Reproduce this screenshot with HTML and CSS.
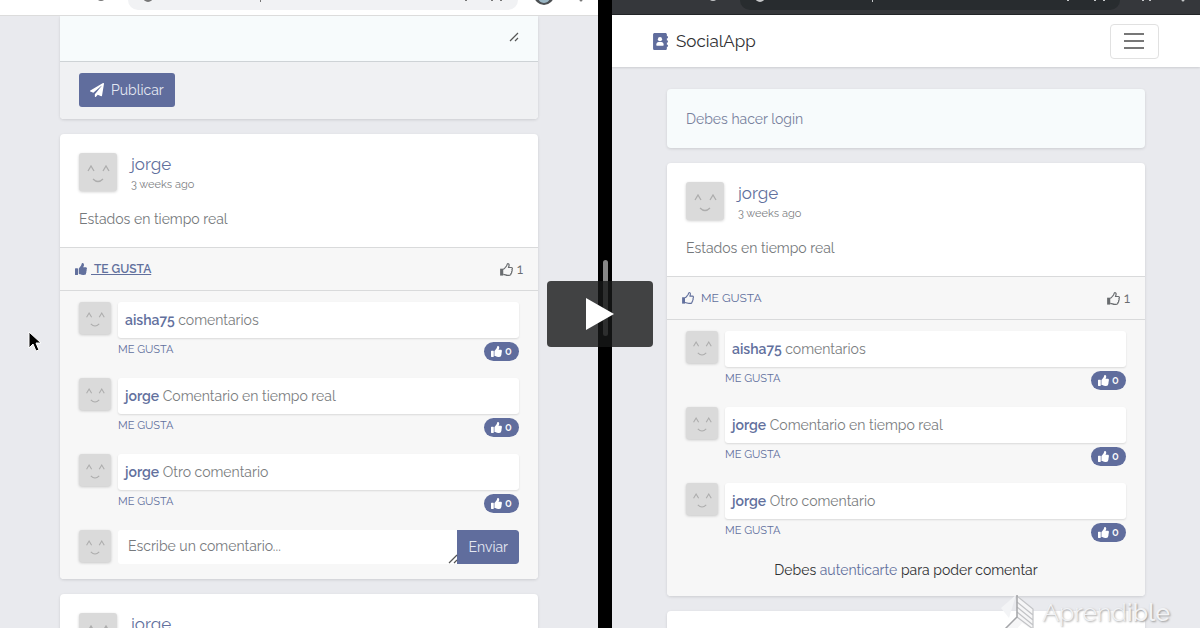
FILE: index.html
```html
<!DOCTYPE html>
<html lang="es">

<head>
    <meta charset="UTF-8">
    <meta name="viewport" content="width=device-width, initial-scale=1.0">
    <title>SocialApp</title>
    <link rel="stylesheet" href="styles.css">
</head>

<body>
    <!-- shared icons -->
    <svg class="sprite" aria-hidden="true">
        <symbol id="thumb" viewBox="0 0 512 512">
            <path d="M104 224H24c-13.300 0-24 10.700-24 24v240c0 13.300 10.700 24 24 24h80c13.300 0 24-10.700 24-24V248c0-13.300-10.700-24-24-24zM384 81.500c0 42.400-26 66.200-33.300 94.500h101.700c33.400 0 59.400 27.700 59.600 58.100.1 17.900-7.500 37.200-19.400 49.200 9.800 23.400 8.200 56.100-9.300 79.500 8.700 25.900-.1 57.700-16.400 74.800 4.300 17.600 2.200 32.600-6.100 44.600C440.600 511.600 389.600 512 346.800 512h-2.800c-48.300 0-87.800-17.600-119.600-31.700-16-7.100-36.800-15.900-52.700-16.200-6.500-.1-11.800-5.500-11.800-12V238.300c0-3.200 1.300-6.300 3.600-8.500 39.600-39.100 56.600-80.600 89.100-113.100 14.800-14.800 20.200-37.200 25.400-58.900C282.500 39.300 291.800 0 312 0c24 0 72 8 72 81.500z"/>
        </symbol>
        <symbol id="thumb-o" viewBox="0 0 512 512">
            <path d="M4 224h124v272H4z"/>
            <path d="M128 250c60-24 88-92 124-126 26-26 22-98 54-98 84 0 48 106 26 150h112c50 0 58 66 22 86 22 26 16 72-12 84 12 34-2 62-26 72 8 44-26 68-76 68h-54c-68 0-92-38-170-40" fill="none" stroke="currentColor" stroke-width="46" stroke-linejoin="round"/>
        </symbol>
        <symbol id="face" viewBox="0 0 38 38">
            <g fill="none" stroke="#adadad" stroke-width="1.300">
                <path d="M9 18l3-5 3 5M24 18l3-5 3 5M14 26q5 5 10 0"/>
            </g>
        </symbol>
        <symbol id="grip" viewBox="0 0 10 10">
            <path d="M1 9l8-8M6 9l3-3" fill="none" stroke="#555" stroke-width="1.200"/>
        </symbol>
    </svg>

    <section class="pane pane-left">
        <div class="browser">
            <div class="omnibox"></div>
            <svg class="browser-icons" viewBox="0 0 598 15" aria-hidden="true">
                <g fill="#777">
                    <circle cx="101" cy="-3" r="4"/>
                    <circle cx="148" cy="-3" r="5"/>
                    <path d="M260 0h1v2h-1zM465 0h2v1h-2zM491 0h2v1h-2zM500 0h2v1h-2z"/>
                    <circle cx="581" cy="0" r="1.500"/>
                </g>
                <circle cx="544" cy="-5" r="10" fill="#4c4f52"/>
                <circle cx="544" cy="-3" r="6" fill="#9ab6c4"/>
            </svg>
        </div>
        <main class="feed">
            <form class="card publish">
                <div class="publish-text">
                    <textarea aria-label="Estado"></textarea>
                    <svg class="grip"><use href="#grip"/></svg>
                </div>
                <div class="publish-footer">
                    <button type="button" class="btn">
                        <svg viewBox="0 0 512 512"><path d="M476 3L12 271c-18 10-16 36 2 43l107 45L409 106c6-5 14 3 9 9L177 409v80c0 24 29 33 42 16l64-78 125 53c14 6 31-3 33-19L512 28c4-20-18-35-36-25z"/></svg>
                        Publicar
                    </button>
                </div>
            </form>

            <article class="card">
                <div class="status">
                    <div class="author">
                        <svg class="avatar"><use href="#face"/></svg>
                        <div>
                            <h2><a href="#">jorge</a></h2>
                            <p class="time">3 weeks ago</p>
                        </div>
                    </div>
                    <p class="status-body">Estados en tiempo real</p>
                </div>
                <div class="actions">
                    <button type="button" class="like liked"><svg><use href="#thumb"/></svg><span>&nbsp;TE GUSTA</span></button>
                    <span class="count"><svg><use href="#thumb-o"/></svg>1</span>
                </div>
                <div class="comments">
                    <div class="comment">
                        <svg class="avatar small"><use href="#face"/></svg>
                        <div class="comment-main">
                            <p class="bubble"><a href="#">aisha75</a> comentarios</p>
                            <div class="comment-foot">
                                <button type="button" class="comment-like">ME GUSTA</button>
                                <span class="badge"><svg><use href="#thumb"/></svg>0</span>
                            </div>
                        </div>
                    </div>
                    <div class="comment">
                        <svg class="avatar small"><use href="#face"/></svg>
                        <div class="comment-main">
                            <p class="bubble"><a href="#">jorge</a> Comentario en tiempo real</p>
                            <div class="comment-foot">
                                <button type="button" class="comment-like">ME GUSTA</button>
                                <span class="badge"><svg><use href="#thumb"/></svg>0</span>
                            </div>
                        </div>
                    </div>
                    <div class="comment">
                        <svg class="avatar small"><use href="#face"/></svg>
                        <div class="comment-main">
                            <p class="bubble"><a href="#">jorge</a> Otro comentario</p>
                            <div class="comment-foot">
                                <button type="button" class="comment-like">ME GUSTA</button>
                                <span class="badge"><svg><use href="#thumb"/></svg>0</span>
                            </div>
                        </div>
                    </div>
                    <form class="comment">
                        <svg class="avatar small"><use href="#face"/></svg>
                        <div class="reply">
                            <textarea rows="1" aria-label="Comentario" placeholder="Escribe un comentario..."></textarea>
                            <svg class="grip"><use href="#grip"/></svg>
                            <button type="button" class="btn">Enviar</button>
                        </div>
                    </form>
                </div>
            </article>

            <article class="card">
                <div class="status">
                    <div class="author">
                        <svg class="avatar"><use href="#face"/></svg>
                        <div>
                            <h2><a href="#">jorge</a></h2>
                        </div>
                    </div>
                </div>
            </article>
        </main>
        <svg class="cursor" viewBox="0 0 14 22" aria-hidden="true">
            <path d="M1 1v16l4-4 3 7 3-1-3-7h5z" fill="#000" stroke="#fff"/>
        </svg>
    </section>

    <div class="divider"><span></span></div>

    <section class="pane pane-right">
        <div class="browser dark">
            <div class="omnibox"></div>
            <svg class="browser-icons" viewBox="0 0 588 15" aria-hidden="true">
                <g fill="#c5c7c9">
                    <circle cx="101" cy="-3" r="4"/>
                    <circle cx="148" cy="-3" r="5"/>
                    <path d="M260 0h1v2h-1zM455 0h2v1h-2zM482 0h2v1h-2zM491 0h2v1h-2zM530 0h2v1h-2zM537 0h2v1h-2z"/>
                    <circle cx="571" cy="0" r="1.500"/>
                </g>
            </svg>
        </div>
        <nav class="navbar">
            <a class="brand" href="#">
                <svg viewBox="0 0 448 512"><path d="M436 160c7 0 12-5 12-12v-40c0-7-5-12-12-12h-20V48c0-27-21-48-48-48H48C21 0 0 21 0 48v416c0 27 21 48 48 48h320c27 0 48-21 48-48v-48h20c7 0 12-5 12-12v-40c0-7-5-12-12-12h-20v-64h20c7 0 12-5 12-12v-40c0-7-5-12-12-12h-20v-64z"/><g fill="#fff"><circle cx="208" cy="188" r="64"/><path d="M96 365c0-58 30-95 72-95h80c42 0 72 37 72 95q0 19-22 19H118q-22 0-22-19z"/></g></svg>
                SocialApp
            </a>
            <button type="button" class="toggler" aria-label="Menu">
                <svg viewBox="0 0 30 30"><path d="M4 8h20M4 15h20M4 22h20" fill="none" stroke="#777" stroke-width="2"/></svg>
            </button>
        </nav>
        <main class="feed">
            <div class="card notice">Debes hacer login</div>

            <article class="card">
                <div class="status">
                    <div class="author">
                        <svg class="avatar"><use href="#face"/></svg>
                        <div>
                            <h2><a href="#">jorge</a></h2>
                            <p class="time">3 weeks ago</p>
                        </div>
                    </div>
                    <p class="status-body">Estados en tiempo real</p>
                </div>
                <div class="actions">
                    <button type="button" class="like"><svg><use href="#thumb-o"/></svg><span>&nbsp;ME GUSTA</span></button>
                    <span class="count"><svg><use href="#thumb-o"/></svg>1</span>
                </div>
                <div class="comments">
                    <div class="comment">
                        <svg class="avatar small"><use href="#face"/></svg>
                        <div class="comment-main">
                            <p class="bubble"><a href="#">aisha75</a> comentarios</p>
                            <div class="comment-foot">
                                <button type="button" class="comment-like">ME GUSTA</button>
                                <span class="badge"><svg><use href="#thumb"/></svg>0</span>
                            </div>
                        </div>
                    </div>
                    <div class="comment">
                        <svg class="avatar small"><use href="#face"/></svg>
                        <div class="comment-main">
                            <p class="bubble"><a href="#">jorge</a> Comentario en tiempo real</p>
                            <div class="comment-foot">
                                <button type="button" class="comment-like">ME GUSTA</button>
                                <span class="badge"><svg><use href="#thumb"/></svg>0</span>
                            </div>
                        </div>
                    </div>
                    <div class="comment">
                        <svg class="avatar small"><use href="#face"/></svg>
                        <div class="comment-main">
                            <p class="bubble"><a href="#">jorge</a> Otro comentario</p>
                            <div class="comment-foot">
                                <button type="button" class="comment-like">ME GUSTA</button>
                                <span class="badge"><svg><use href="#thumb"/></svg>0</span>
                            </div>
                        </div>
                    </div>
                    <p class="login-hint">Debes <a href="#">autenticarte</a> para poder comentar</p>
                </div>
            </article>

            <article class="card next"></article>
        </main>
    </section>

    <button type="button" class="play" aria-label="Play">
        <svg viewBox="0 0 28 32"><path d="M0 0l28 16L0 32z" fill="#fff"/></svg>
    </button>

    <div class="watermark">
        <svg viewBox="0 0 36 36" aria-hidden="true">
            <path d="M16 1L1 14l8 10z" fill="#f3f4f6"/>
            <path d="M17 1v22L4 36h12l6-7 11 7V15z" fill="#f6f6f7"/>
            <path d="M17 2l16 13v21M17 8l16 13M17 13l16 13M17 18l16 13M17 23l16 12" fill="none" stroke="#c2c3c6" stroke-width="1.200"/>
            <path d="M17 1v22L4 36" fill="none" stroke="#a4a5a8" stroke-width="1.500"/>
        </svg>
        <span>Aprend<b>ible</b></span>
    </div>
</body>

</html>
```
FILE: styles.css
```css
* {
    box-sizing: border-box;
}

body {
    position: relative;
    display: flex;
    height: 100vh;
    margin: 0;
    overflow: hidden;
    color: #303133;
    font-family: "Raleway", "Lato", sans-serif;
    font-size: 14px;
    line-height: 20px;
}

h2,
p {
    margin: 0;
    font-weight: normal;
}

a {
    color: #62709d;
    text-decoration: none;
}

button,
textarea {
    font: inherit;
    border: 0;
    padding: 0;
    background: none;
}

svg {
    display: block;
    flex: none;
    fill: currentColor;
}

.sprite {
    position: absolute;
    width: 0;
    height: 0;
}

.pane {
    position: relative;
    min-width: 0;
    overflow: hidden;
    background: #e9eaee;
}

.pane-left {
    flex: 598;
}

.pane-right {
    flex: 588;
}

.divider {
    display: flex;
    align-items: center;
    justify-content: center;
    width: 14px;
    background: #000;
}

.divider span {
    width: 5px;
    height: 76px;
    margin-bottom: 32px;
    border-radius: 3px;
    background: #858585;
}

/* browser chrome */
.browser {
    position: relative;
    height: 16px;
    padding: 0 80px 0 128px;
    background: #fff;
    border-bottom: 1px solid #dcdcdc;
}

.omnibox {
    height: 10px;
    border-radius: 0 0 14px 14px;
    background: #f1f2f4;
}

.browser-icons {
    position: absolute;
    top: 0;
    left: 0;
    width: 100%;
    height: 15px;
}

.browser.dark {
    height: 15px;
    background: #35373b;
    border-color: #222427;
}

.dark .omnibox {
    background: #282c2f;
}

/* cards */
.feed {
    max-width: 478px;
    margin: 0 auto;
}

.card {
    margin-bottom: 15px;
    border-radius: 4px;
    background: #fff;
    box-shadow: 0 1px 3px rgba(0, 0, 0, .12);
    overflow: hidden;
}

.publish {
    border-radius: 0 0 4px 4px;
}

.publish-text {
    position: relative;
    height: 46px;
    background: #f7fbfc;
    border-bottom: 1px solid #ced3d6;
}

.publish-text textarea {
    width: 100%;
    height: 100%;
    resize: none;
}

.grip {
    position: absolute;
    width: 10px;
    height: 10px;
}

.publish-text .grip {
    right: 19px;
    top: 16px;
}

.publish-footer {
    padding: 11px 19px 12px;
    background: #f0f1f3;
}

.btn {
    display: flex;
    align-items: center;
    gap: 7px;
    height: 34px;
    padding: 0 11px;
    border-radius: 3px;
    background: #606d9d;
    color: #e4e8f2;
}

.btn svg {
    width: 14px;
    height: 14px;
    color: #fff;
}

.status {
    padding: 19px 19px 18px;
}

.author {
    display: flex;
    gap: 14px;
    height: 38px;
}

.avatar {
    width: 38px;
    height: 38px;
    border-radius: 3px;
    background: #dadada;
    box-shadow: 0 1px 3px rgba(0, 0, 0, .2);
}

.avatar.small {
    width: 32px;
    height: 32px;
}

h2 {
    font-size: 17px;
    line-height: 22px;
}

.time {
    color: #7d8083;
    font-size: 11px;
}

.status-body {
    margin-top: 18px;
    color: #75797c;
}

.actions {
    display: flex;
    align-items: center;
    justify-content: space-between;
    height: 44px;
    padding: 0 15px;
    background: #f7f7f7;
    border-top: 1px solid #d9dadb;
    border-bottom: 1px solid #d9dadb;
}

.like,
.count {
    display: flex;
    align-items: center;
    gap: 4px;
    color: #62709d;
    font-size: 12px;
}

.like svg {
    width: 12px;
    height: 12px;
}

.liked {
    font-weight: 600;
}

.liked span {
    text-decoration: underline;
}

.count {
    color: #696c6f;
    font-size: 14px;
}

.count svg {
    width: 13px;
    height: 13px;
}

.comments {
    display: grid;
    gap: 16px;
    padding: 11px 19px 15px;
    background: #f7f7f7;
}

.comment {
    display: flex;
    gap: 7px;
}

.comment-main {
    flex: 1;
}

.bubble {
    padding: 7px;
    border-radius: 3px;
    background: #fff;
    color: #7a7d80;
    box-shadow: 0 1px 2px rgba(0, 0, 0, .12);
    line-height: 22px;
}

.bubble a {
    font-weight: 600;
}

.comment-foot {
    display: flex;
    justify-content: space-between;
    height: 24px;
}

.comment-like {
    height: 24px;
    color: #62709d;
    font-size: 11px;
}

.badge {
    display: flex;
    align-items: center;
    justify-content: center;
    gap: 3px;
    width: 35px;
    height: 19px;
    margin-top: 4px;
    border-radius: 10px;
    background: #606d9d;
    color: #fff;
    font-size: 11px;
    font-weight: 600;
}

.badge svg {
    width: 11px;
    height: 11px;
}

.reply {
    position: relative;
    display: flex;
    flex: 1;
    height: 34px;
    border-radius: 3px;
    background: #fff;
    overflow: hidden;
}

.reply textarea {
    flex: 1;
    min-width: 0;
    height: 34px;
    padding: 6px 10px;
    resize: none;
}

.reply textarea::placeholder {
    color: #777a7e;
}

.reply .grip {
    right: 61px;
    bottom: 0;
}

.reply .btn {
    border-radius: 0 3px 3px 0;
}

/* right window */
.navbar {
    display: flex;
    align-items: center;
    justify-content: space-between;
    height: 52px;
    padding: 0 41px;
    background: #fff;
    box-shadow: 0 1px 2px rgba(0, 0, 0, .12);
}

.brand {
    display: flex;
    align-items: center;
    gap: 8px;
    color: #303133;
    font-size: 17px;
}

.brand svg {
    width: 15px;
    height: 17px;
    color: #606d9d;
}

.toggler {
    display: flex;
    align-items: center;
    justify-content: center;
    width: 49px;
    height: 35px;
    border: 1px solid #e1e1e1;
    border-radius: 4px;
}

.toggler svg {
    width: 30px;
    height: 30px;
}

.pane-right .feed {
    padding-top: 22px;
}

.notice {
    padding: 20px 19px 19px;
    background: #f7fbfc;
    color: #77819c;
}

.login-hint {
    padding: 1px 0;
    text-align: center;
}

.next {
    height: 80px;
}

/* overlays */
.cursor {
    position: absolute;
    left: 28px;
    top: 331px;
    width: 14px;
    height: 22px;
}

.play {
    position: absolute;
    left: 50%;
    top: 50%;
    display: flex;
    align-items: center;
    justify-content: center;
    width: 106px;
    height: 66px;
    border-radius: 4px;
    background: rgba(23, 24, 24, .8);
    transform: translate(-50%, -50%);
}

.play svg {
    width: 28px;
    height: 32px;
}

.watermark {
    position: absolute;
    right: 30px;
    bottom: -2px;
    display: flex;
    align-items: center;
    gap: 6px;
    color: #f2f3f5;
    font-size: 25px;
    font-weight: 300;
    line-height: 36px;
    text-shadow: 1px 1px 2px #999;
}

.watermark b {
    font-weight: 500;
}

.watermark svg {
    width: 36px;
    height: 36px;
}
```
